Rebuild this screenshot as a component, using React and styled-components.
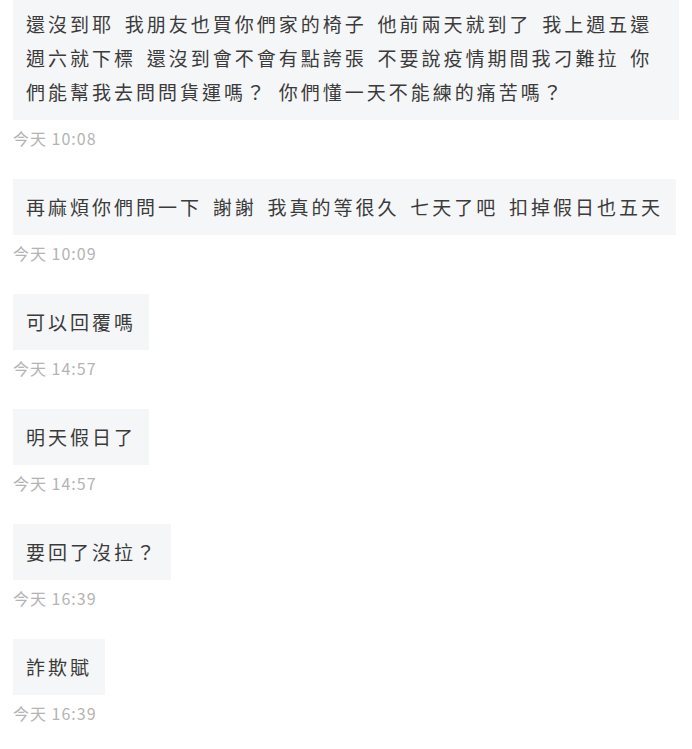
import styled, { createGlobalStyle } from "styled-components";

const GlobalStyle = createGlobalStyle`
  html, body {
    margin: 0;
    padding: 0;
    background: #ffffff;
  }
`

const Chat = styled.main`
  width: 692px;
  height: 749px;
  overflow: hidden;
  background: #ffffff;
`

const List = styled.div`
  display: flex;
  flex-direction: column;
  align-items: flex-start;
  padding-left: 13px;
  margin-top: -4px;
`

const Message = styled.div`
  display: flex;
  flex-direction: column;
  align-items: flex-start;
  margin-bottom: 31px;
`

const Bubble = styled.div`
  max-width: 640px;
  padding: 11px 13px;
  background: #f5f6f7;
  color: #3b3b3b;
  font-family: "Noto Sans CJK TC", "Noto Sans CJK SC", sans-serif;
  font-size: 19px;
  line-height: 34px;
  letter-spacing: 3px;
  word-spacing: 3.5px;
`

const Time = styled.div`
  margin-top: 8px;
  height: 20px;
  color: #b4b4b4;
  font-family: "Noto Sans CJK TC", sans-serif;
  font-size: 16px;
  line-height: 20px;
  letter-spacing: 1px;
`

const messages = [
  {
    text: "還沒到耶 我朋友也買你們家的椅子 他前兩天就到了 我上週五還週六就下標 還沒到會不會有點誇張 不要說疫情期間我刁難拉 你們能幫我去問問貨運嗎？ 你們懂一天不能練的痛苦嗎？",
    time: "今天 10:08",
  },
  { text: "再麻煩你們問一下 謝謝 我真的等很久 七天了吧 扣掉假日也五天", time: "今天 10:09" },
  { text: "可以回覆嗎", time: "今天 14:57" },
  { text: "明天假日了", time: "今天 14:57" },
  { text: "要回了沒拉？", time: "今天 16:39" },
  { text: "詐欺賦", time: "今天 16:39" },
]

const App = () => {
  return (
    <Chat>
      <GlobalStyle />
      <List>
        {messages.map((m, i) => (
          <Message key={i}>
            <Bubble>{m.text}</Bubble>
            <Time>{m.time}</Time>
          </Message>
        ))}
      </List>
    </Chat>
  );
};

export default App;
